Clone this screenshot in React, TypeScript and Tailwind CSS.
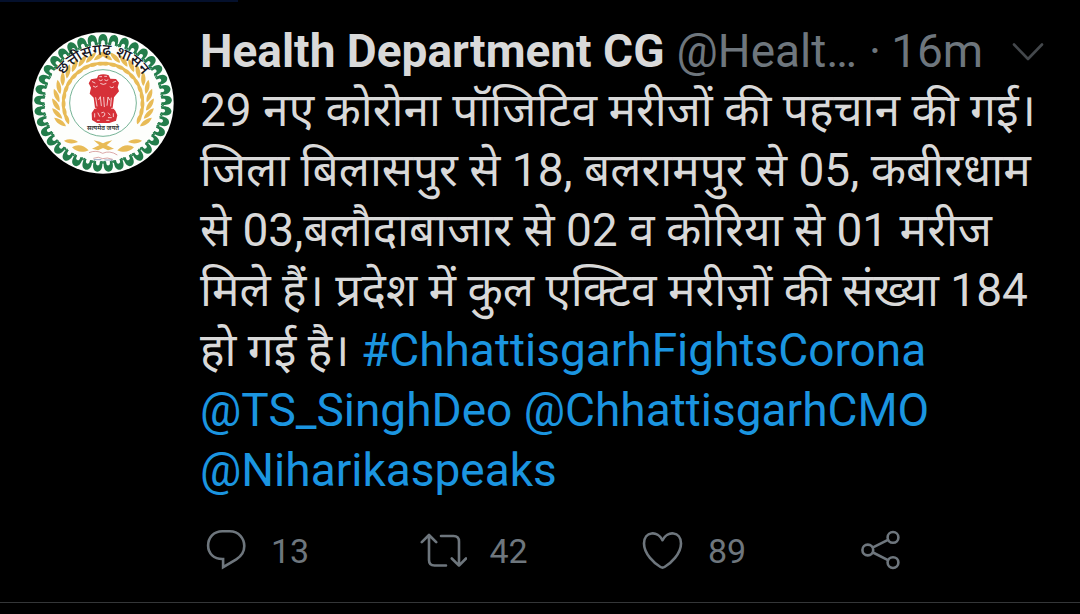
import type { ReactNode } from 'react';

const beads = Array.from({ length: 37 }, (_, i) => (i * 360) / 37);
const leaves = Array.from({ length: 11 }, (_, i) => 12 + i * 11);

function Wreath() {
  return (
    <g fill="#e8bb56">
      {leaves.map((a) => (
        <g key={a} transform={`rotate(${-a} 251 249)`}>
          <path d="M251 118 C258 105 274 98 291 101 C283 113 266 121 251 118Z" />
          <path d="M251 128 C262 123 278 126 287 135 C274 141 260 139 251 128Z" />
        </g>
      ))}
      <path d="M134 362 C150 355 165 358 176 366 C160 373 145 371 134 362Z" />
      <path d="M158 382 C173 371 194 375 208 391 C188 400 170 395 158 382Z" />
    </g>
  );
}

function Emblem() {
  return (
    <svg viewBox="39 36 424 426" className="size-full" role="img" aria-label="छत्तीसगढ़ शासन">
      <circle cx="251" cy="249" r="212" fill="#fdfefc" />
      {beads.map((a) => (
        <g key={a} transform={`rotate(${a} 251 249)`}>
          <path
            d="M238 71 C235 54 240 43 251 42 C262 43 267 54 264 71 L257 74 L256 64 Q251 58 246 64 L245 74Z"
            fill="#237d4b"
          />
          <path d="M234 68 L239 74 L245 71 M257 71 L263 74 L268 68" fill="none" stroke="#237d4b" strokeWidth="3" />
        </g>
      ))}
      <Wreath />
      <g transform="translate(502 0) scale(-1 1)">
        <Wreath />
      </g>
      <path d="M223 361 L241 365 L284 386 L266 391 L249 383Z" fill="#e8bb56" />
      <path d="M279 361 L261 365 L218 386 L236 391 L253 383Z" fill="#e8bb56" />
      <circle cx="251" cy="249" r="100" fill="#fff" stroke="#2f8d60" strokeWidth="2" />
      <path
        d="M209 398 Q230 389 250 400 Q271 390 294 405 M222 415 Q238 408 250 416 Q263 411 280 418"
        fill="none"
        stroke="#c87b7b"
        strokeWidth="2"
      />
      <path d="M223 419 H246 M255 420 H280" stroke="#5d79a8" strokeWidth="2" />
      <path
        d="M237 166 Q252 159 268 166 L273 176 L290 177 L299 188 L295 202 L299 214 L289 226 L284 232 L280 263 L288 272 L294 286 L290 302 L270 309 L233 309 L218 300 L217 279 L227 264 L223 233 L211 221 L215 203 L208 190 L215 178 L233 175Z"
        fill="#d63038"
      />
      <g fill="none" stroke="#fbe9e9" strokeWidth="2.5" strokeLinecap="round">
        <path d="M241 170 h6 M256 169 h6 M239 180 q5 5 10 0 M256 180 q5 5 10 0 M219 185 l8 4 M281 187 l8 -3 M222 199 q6 6 12 0 M272 201 q6 6 11 0 M244 191 q8 5 16 0" />
        <path d="M229 233 l4 25 M238 239 l5 -9 3 27 M253 232 l2 28 M263 256 l3 -25 5 9 M276 234 l-2 24 M222 265 H230 M277 265 H285" />
        <path d="M226 281 v10 M236 279 l5 10 M247 278 q7 -4 10 3 q0 7 -7 9 M267 279 l5 6 M267 293 h9 M282 281 v9 M234 301 h6 M262 301 h7" />
      </g>
      <text
        x="251"
        y="329"
        textAnchor="middle"
        fontSize="19"
        fontWeight="600"
        fill="#333"
        fontFamily="'Noto Sans', 'Noto Sans Devanagari', sans-serif"
      >
        सत्यमेव जयते
      </text>
      <path id="title-arc" d="M111 209 A146 146 0 0 1 391 209" fill="none" />
      <text
        fontSize="46"
        fontWeight="500"
        fill="#15151f"
        textAnchor="middle"
        fontFamily="'Noto Sans', 'Noto Sans Devanagari', sans-serif"
      >
        <textPath href="#title-arc" startOffset="50%">
          छत्तीसगढ़ शासन
        </textPath>
      </text>
    </svg>
  );
}

function Icon({ children }: { children: ReactNode }) {
  return (
    <svg
      viewBox="0 0 48 42"
      className="h-[42px] w-12 shrink-0"
      fill="none"
      stroke="currentColor"
      strokeWidth="2.6"
      strokeLinecap="round"
      strokeLinejoin="round"
      aria-hidden="true"
    >
      {children}
    </svg>
  );
}

const actions = [
  {
    label: 'Reply',
    count: '13',
    icon: (
      <path
        strokeLinejoin="miter"
        d="M22.3 2.2 H29.8 C38.8 2.2 44.3 9.5 44.3 17 C44.3 23.5 40.8 27.5 36.3 30.3 L23.1 38.2 V30 C13.8 30.3 8.1 24.5 8.1 16.6 C8.1 8.5 13.8 2.2 22.3 2.2Z"
      />
    ),
  },
  {
    label: 'Retweet',
    count: '42',
    icon: (
      <path d="M2.8 13.2 L10 6 L17.2 13.2 M10 6.5 V31 Q10 36.5 15.5 36.5 H27 M22 7 H34.5 Q40 7 40 12.5 V36.5 M32.8 29.5 L40 36.7 L47 29.5" />
    ),
  },
  {
    label: 'Like',
    count: '89',
    icon: (
      <path d="M25.5 11.2 C21 1.2 7 2.2 7 14.5 C7 25 17.5 34.5 23.5 38 Q25.5 39.2 27.5 38 C33.5 34.5 44 25 44 14.5 C44 2.2 30 1.2 25.5 11.2Z" />
    ),
  },
  {
    label: 'Share',
    count: '',
    icon: (
      <>
        <circle cx="11.8" cy="21" r="5.4" />
        <circle cx="37" cy="8.4" r="5.4" />
        <circle cx="37" cy="33.6" r="5.4" />
        <path d="M17 18.4 L32 10.9 M17 23.5 L32 31.1" />
      </>
    ),
  },
];

export default function App() {
  return (
    <main className="min-h-screen bg-black font-['Roboto','Noto_Sans','Noto_Sans_Devanagari',sans-serif] text-[#d9d9d9]">
      <div className="h-0.5 w-[22%] bg-[#04102c]" />
      <article className="flex gap-[26px] border-b border-[#343638] pt-[22px] pl-8">
        <a href="#profile" className="mt-2 size-[142px] shrink-0">
          <Emblem />
        </a>
        <div className="min-w-0 flex-1">
          <header className="flex h-14 items-baseline pr-9 text-[46px] leading-[54px] whitespace-nowrap">
            <a href="#profile" className="font-bold">
              Health Department CG
            </a>
            <span className="ml-3 text-[#6e767d]">@Healt…</span>
            <span className="ml-3 text-[#6e767d]">·</span>
            <time className="ml-2.5 text-[#6e767d]">16m</time>
            <button type="button" aria-label="More options" className="ml-auto self-center text-[#44484c]">
              <svg
                viewBox="0 0 32 20"
                className="h-5 w-8"
                fill="none"
                stroke="currentColor"
                strokeWidth="2.6"
                strokeLinecap="round"
                strokeLinejoin="round"
              >
                <path d="M2 2.5 L16 17 L30 2.5" />
              </svg>
            </button>
          </header>
          <p className="text-[46px] leading-[60px] whitespace-nowrap">
            29 नए कोरोना पॉजिटिव मरीजों की पहचान की गई।
            <br />
            जिला बिलासपुर से 18, बलरामपुर से 05, कबीरधाम
            <br />
            से 03,बलौदाबाजार से 02 व कोरिया से 01 मरीज
            <br />
            मिले हैं। प्रदेश में कुल एक्टिव मरीज़ों की संख्या 184
            <br />
            हो गई है।{' '}
            <a href="#hashtag" className="text-[#1b95e0]">
              #ChhattisgarhFightsCorona
            </a>
            <br />
            <a href="#tssinghdeo" className="text-[#1b95e0]">
              @TS_SinghDeo
            </a>{' '}
            <a href="#cmo" className="text-[#1b95e0]">
              @ChhattisgarhCMO
            </a>
            <br />
            <a href="#niharika" className="text-[#1b95e0]">
              @Niharikaspeaks
            </a>
          </p>
          <div className="mt-[29px] mb-[31px] grid grid-cols-4 pr-1.5">
            {actions.map((action) => (
              <button
                key={action.label}
                type="button"
                aria-label={`${action.label} ${action.count}`.trim()}
                className="flex h-[42px] items-center gap-[23px] text-[34px] leading-[42px] text-[#6e767d]"
              >
                <Icon>{action.icon}</Icon>
                {action.count && <span className="pt-0.5">{action.count}</span>}
              </button>
            ))}
          </div>
        </div>
      </article>
    </main>
  );
}
